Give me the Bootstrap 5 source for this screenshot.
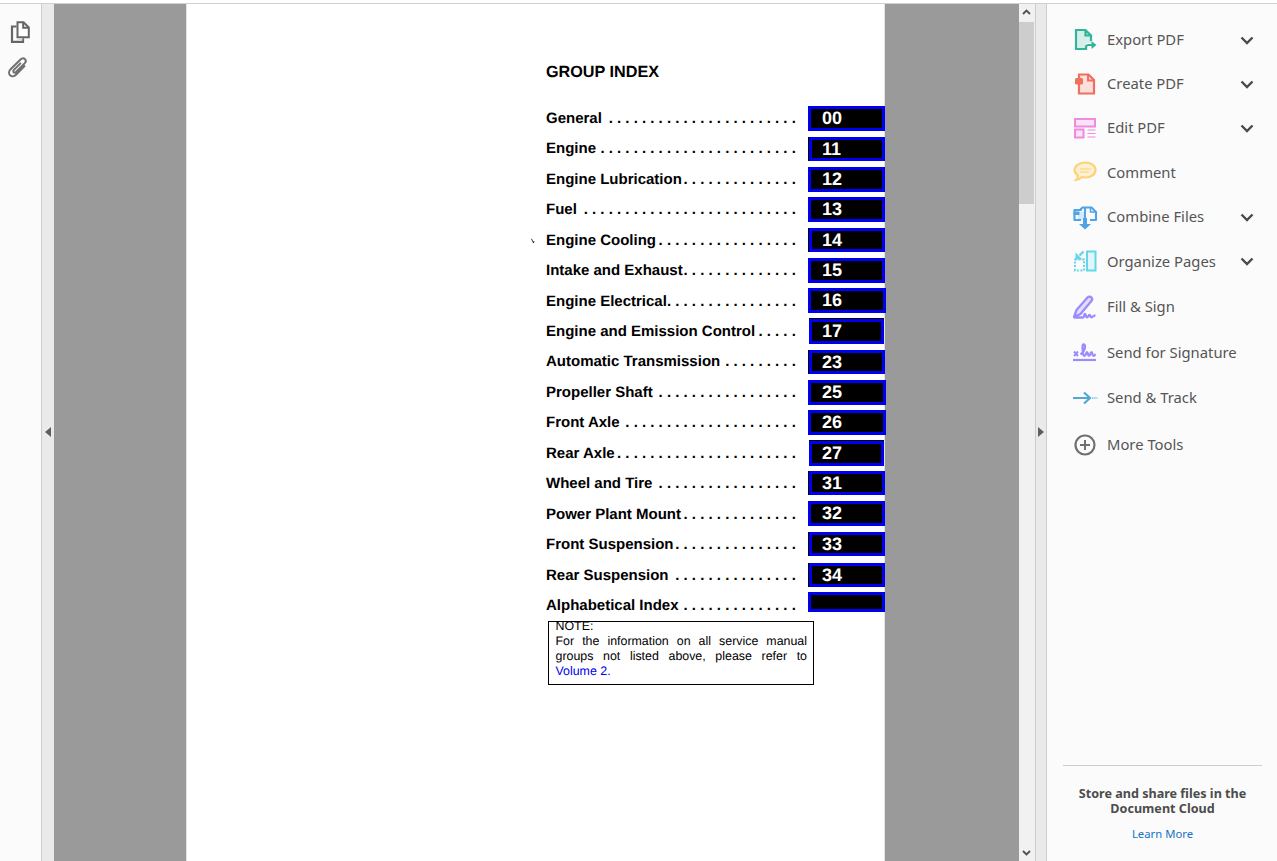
<!DOCTYPE html>
<html lang="en">
<head>
<meta charset="utf-8">
<title>GROUP INDEX</title>
<link href="https://cdn.jsdelivr.net/npm/bootstrap@5.3.0/dist/css/bootstrap.min.css" rel="stylesheet">
<style>
html,body{height:100%;overflow:hidden;background:#fbfbfb}
.top-strip{height:4px;background:#fff;border-bottom:1px solid #cfcfcf;flex:none}
.shell{height:857px}
.rail{width:42px;background:#fbfbfb;border-right:1px solid #cdcdcd;padding-top:16px;gap:12px}
.nudge-a{margin-right:2px}
.nudge-b{margin-right:5px}
.strip{background:#eaeaea;position:relative}
.strip-l{width:12px}
.strip-r{border-left:1px solid #cdcdcd;border-right:1px solid #cdcdcd;width:12px}
.arr{position:absolute;top:423px;width:0;height:0;border-top:5.5px solid transparent;border-bottom:5.5px solid transparent}
.arr-l{left:3px;border-right:6px solid #5f5f5f}
.arr-r{left:2px;border-left:6px solid #5f5f5f}
.viewer{width:965px;background:#9a9a9a;padding-left:132px;overflow:hidden}
.sheet{width:699px;height:100%;background:#fff;border-left:1px solid #e2e2e2;border-right:1px solid #e2e2e2;padding:57px 0 0 359px;font-family:"Liberation Sans",Arial,sans-serif;color:#000;position:relative;text-rendering:geometricPrecision}
.sheet-title{font-size:16.2px;font-weight:700;line-height:22px;margin-bottom:20px}
.idx-row{height:30.44px;font-size:15px;font-weight:700;position:relative}
.idx-label{width:250px;white-space:nowrap;flex:none;padding-top:2px}
.idx-name{margin-right:-20px}
.idx-dots{letter-spacing:4.15px;margin-right:-4px;font-size:15px}
.tabbox{width:77px;height:25px;margin-left:12px;background:#000;border:3px solid #0000f0;color:#fff;font-size:18px;line-height:18px;padding-left:11px;flex:none}
.tb-in{margin-left:13px;width:76px;height:24px;padding-left:10px;box-shadow:-1px 0 0 #000}
.tb-wide{width:78px}
.tb-nar{margin-left:13px;width:75px;padding-left:10px;box-shadow:0 -1px 0 #000}
.tb-low{height:20px;margin-bottom:6px}
.stray{position:absolute;left:-15px;top:13px}
.note-box{width:266px;height:64px;margin:1px 0 0 2px;border:1px solid #000;padding:0 6px 0 6.5px;font-size:12.4px;line-height:15px;overflow:hidden;text-align:justify}
.note-in{margin-top:-3.5px}
.note-link{color:#0000f0}
.scroller{width:16px;background:#f1f1f1;position:relative}
.thumb{position:absolute;left:0;top:18px;width:15px;height:182px;background:#cdcdcd}
.sc-up{position:absolute;left:3px;top:5px}
.sc-dn{position:absolute;left:3px;bottom:5px}
.tools{width:230px;background:#fbfbfb;font-family:"Noto Sans","Open Sans",sans-serif;color:#555}
.tool-list{padding-top:13.5px}
.tool-item{height:44px;padding-left:25px;font-size:14.8px;flex:none}
.tool-ico{width:26px;height:26px;flex:none;margin-right:9px}
.tool-chev{position:absolute;left:193px;top:18px}
.sp-a{margin-top:.5px}.sp-b{margin-top:1px}.sp-c{margin-top:1.5px}.sp-d{margin-top:3px}
.tools-foot{margin:auto 15px 0 16px;border-top:1px solid #cdcdcd;padding:20px 0 19px;text-align:center}
.foot-txt{font-size:12.6px;font-weight:700;line-height:15px;color:#4c4c4c;margin-bottom:10px}
.foot-link{font-size:11.3px;line-height:16px;color:#1473c7;text-decoration:none;display:block}
</style>
</head>
<body>
<svg width="0" height="0" class="position-absolute">
  <symbol id="chev" viewBox="0 0 14 9"><path d="M1.500 1.500 7 7l5.500-5.500" fill="none" stroke="#4a4a4a" stroke-width="2.400"/></symbol>
</svg>
<div class="top-strip"></div>
<div class="d-flex shell">
  <div class="rail d-flex flex-column align-items-center flex-shrink-0">
    <svg class="nudge-a" width="24" height="24" viewBox="0 0 24 24" fill="none" stroke="#666" stroke-width="2">
      <path d="M9.500 2.200h6l5.300 5.300v9.800H9.500z" fill="#fff"/><path d="M15.200 2.200v5.600h5.600"/>
      <path d="M8.500 6.500H4v15.300h11v-3.500" stroke-width="2.200"/><path d="M9.500 19.500h5" stroke="#d8d8d8"/>
    </svg>
    <svg class="nudge-b" width="24" height="24" viewBox="0 0 24 24" fill="none" stroke="#707070" stroke-width="2">
      <path d="M19 9.500 10 18.800c-1.800 1.800-4.300 2-5.900.5-1.600-1.600-1.300-4.200.5-6L14.500 3.500c1.300-1.300 3.200-1.500 4.400-.4 1.200 1.200 1 3-.3 4.300l-8.600 8.600c-.7.7-1.700.8-2.300.2-.6-.6-.5-1.600.2-2.300l7-7"/>
    </svg>
  </div>
  <div class="strip strip-l flex-shrink-0"><span class="arr arr-l"></span></div>
  <div class="viewer flex-shrink-0">
    <div class="sheet">
      <div class="sheet-title">GROUP INDEX</div>
      <div class="idx-row d-flex align-items-center"><span class="idx-label d-flex justify-content-between"><span class="idx-name">General</span><span class="idx-dots">.......................</span></span><span class="tabbox">00</span></div>
      <div class="idx-row d-flex align-items-center"><span class="idx-label d-flex justify-content-between"><span class="idx-name">Engine</span><span class="idx-dots">........................</span></span><span class="tabbox tb-in">11</span></div>
      <div class="idx-row d-flex align-items-center"><span class="idx-label d-flex justify-content-between"><span class="idx-name">Engine Lubrication</span><span class="idx-dots">..............</span></span><span class="tabbox">12</span></div>
      <div class="idx-row d-flex align-items-center"><span class="idx-label d-flex justify-content-between"><span class="idx-name">Fuel</span><span class="idx-dots">..........................</span></span><span class="tabbox">13</span></div>
      <div class="idx-row d-flex align-items-center"><svg class="stray" width="4" height="6" viewBox="0 0 4 6"><path d="M.5.800 2.500 5 3 3" fill="none" stroke="#223" stroke-width=".9"/></svg><span class="idx-label d-flex justify-content-between"><span class="idx-name">Engine Cooling</span><span class="idx-dots">.................</span></span><span class="tabbox tb-in">14</span></div>
      <div class="idx-row d-flex align-items-center"><span class="idx-label d-flex justify-content-between"><span class="idx-name">Intake and Exhaust</span><span class="idx-dots">..............</span></span><span class="tabbox">15</span></div>
      <div class="idx-row d-flex align-items-center"><span class="idx-label d-flex justify-content-between"><span class="idx-name">Engine Electrical</span><span class="idx-dots">................</span></span><span class="tabbox tb-wide">16</span></div>
      <div class="idx-row d-flex align-items-center"><span class="idx-label d-flex justify-content-between"><span class="idx-name">Engine and Emission Control</span><span class="idx-dots">.....</span></span><span class="tabbox tb-nar">17</span></div>
      <div class="idx-row d-flex align-items-center"><span class="idx-label d-flex justify-content-between"><span class="idx-name">Automatic Transmission</span><span class="idx-dots">.........</span></span><span class="tabbox tb-in">23</span></div>
      <div class="idx-row d-flex align-items-center"><span class="idx-label d-flex justify-content-between"><span class="idx-name">Propeller Shaft</span><span class="idx-dots">.................</span></span><span class="tabbox tb-wide">25</span></div>
      <div class="idx-row d-flex align-items-center"><span class="idx-label d-flex justify-content-between"><span class="idx-name">Front Axle</span><span class="idx-dots">.....................</span></span><span class="tabbox tb-wide">26</span></div>
      <div class="idx-row d-flex align-items-center"><span class="idx-label d-flex justify-content-between"><span class="idx-name">Rear Axle</span><span class="idx-dots">......................</span></span><span class="tabbox tb-nar">27</span></div>
      <div class="idx-row d-flex align-items-center"><span class="idx-label d-flex justify-content-between"><span class="idx-name">Wheel and Tire</span><span class="idx-dots">.................</span></span><span class="tabbox tb-in">31</span></div>
      <div class="idx-row d-flex align-items-center"><span class="idx-label d-flex justify-content-between"><span class="idx-name">Power Plant Mount</span><span class="idx-dots">..............</span></span><span class="tabbox">32</span></div>
      <div class="idx-row d-flex align-items-center"><span class="idx-label d-flex justify-content-between"><span class="idx-name">Front Suspension</span><span class="idx-dots">...............</span></span><span class="tabbox tb-in">33</span></div>
      <div class="idx-row d-flex align-items-center"><span class="idx-label d-flex justify-content-between"><span class="idx-name">Rear Suspension</span><span class="idx-dots">...............</span></span><span class="tabbox tb-in">34</span></div>
      <div class="idx-row d-flex align-items-center"><span class="idx-label d-flex justify-content-between"><span class="idx-name">Alphabetical Index</span><span class="idx-dots">..............</span></span><span class="tabbox tb-low"></span></div>
      <div class="note-box">
        <div class="note-in">NOTE:<br>For the information on all service manual groups not listed above, please refer to <span class="note-link">Volume 2.</span></div>
      </div>
    </div>
  </div>
  <div class="scroller flex-shrink-0">
    <svg class="sc-up" width="9" height="7" viewBox="0 0 9 7"><path d="M1 5 4.500 1.500 8 5" fill="none" stroke="#505050" stroke-width="1.800"/></svg>
    <div class="thumb"></div>
    <svg class="sc-dn" width="9" height="7" viewBox="0 0 9 7"><path d="M1 2 4.500 5.500 8 2" fill="none" stroke="#505050" stroke-width="1.800"/></svg>
  </div>
  <div class="strip strip-r flex-shrink-0"><span class="arr arr-r"></span></div>
  <div class="tools d-flex flex-column flex-shrink-0">
    <div class="tool-list">
      <div class="tool-item d-flex align-items-center position-relative">
        <svg class="tool-ico" viewBox="0 0 26 26"><path d="M4 3h9.500L19 8.500V16h-5v6H4z" fill="#d7efe9"/><path d="M13 22H4V3h9.500L19 8.500V14M13.500 3v5.500H19" fill="none" stroke="#33b398" stroke-width="2.200"/><path d="M14 23v-2.500q0-2.500 2.500-2.500H21" fill="none" stroke="#33b398" stroke-width="2.200"/><path d="M19.500 14 24.500 18l-5 4z" fill="#33b398"/></svg>
        Export PDF
        <svg class="tool-chev" width="14" height="9"><use href="#chev"/></svg>
      </div>
      <div class="tool-item d-flex align-items-center position-relative">
        <svg class="tool-ico" viewBox="0 0 26 26"><path d="M7 3.500h9.500L22 9v13.500H7z" fill="#fadfdb" stroke="#f0705f" stroke-width="2.200"/><path d="M16 3.500v6h6" fill="none" stroke="#f0705f" stroke-width="2"/><rect x="3" y="7" width="8" height="6.500" rx="1.500" fill="#f0705f"/></svg>
        Create PDF
        <svg class="tool-chev" width="14" height="9"><use href="#chev"/></svg>
      </div>
      <div class="tool-item d-flex align-items-center position-relative">
        <svg class="tool-ico" viewBox="0 0 26 26"><rect x="3" y="4" width="20" height="7.500" fill="#fae2f7" stroke="#f08adf" stroke-width="2"/><rect x="3" y="14.500" width="8.500" height="8" fill="#fae2f7" stroke="#f08adf" stroke-width="2"/><path d="M15.500 15h8M15.500 18.500h8M15.500 22h8" stroke="#f08adf" stroke-width="1.200"/></svg>
        Edit PDF
        <svg class="tool-chev" width="14" height="9"><use href="#chev"/></svg>
      </div>
      <div class="tool-item d-flex align-items-center position-relative sp-a">
        <svg class="tool-ico" viewBox="0 0 26 26"><path d="M13.500 3.500c5.500 0 10 3.200 10 7.500s-4.500 7.500-10 7.500c-1.300 0-2.500-.2-3.600-.5-1.500 1.600-3.800 3-5.900 3 1.200-1.100 1.900-2.700 1.900-4.500-2-1.300-3.400-3.300-3.400-5.500 0-4.300 5.500-7.500 11-7.500z" fill="#fdf1d2" stroke="#fdd27a" stroke-width="2.200"/><path d="M8 10h11M8 13h9" stroke="#fbd06f" stroke-width="1"/></svg>
        Comment
      </div>
      <div class="tool-item d-flex align-items-center position-relative sp-a">
        <svg class="tool-ico" viewBox="0 0 26 26"><path d="M6 8h6v8H6z" fill="#d6e9f9"/><path d="M9 16H2.500V6H8l2.500-2.500h2.500V16M13 16V3.500h6.500L24 8v8h-6" fill="none" stroke="#4fa3e6" stroke-width="2.100" stroke-linejoin="round"/><path d="M1.500 7.500h6v3.500h-6z" fill="#4fa3e6"/><path d="M18.500 3.500v4.500H24M9 4v3" fill="none" stroke="#4fa3e6" stroke-width="1.500"/><path d="M11 14h4v6h4l-6 5.500L7 20h4z" fill="#4fa3e6"/></svg>
        Combine Files
        <svg class="tool-chev" width="14" height="9"><use href="#chev"/></svg>
      </div>
      <div class="tool-item d-flex align-items-center position-relative sp-a">
        <svg class="tool-ico" viewBox="0 0 26 26"><rect x="15" y="3.500" width="8.500" height="19" fill="#e0f6fa" stroke="#65d6e8" stroke-width="2"/><path d="M3 11.500h9v11H3z" fill="none" stroke="#65d6e8" stroke-width="2" stroke-dasharray="2 1.600"/><path d="M11.500 3.500 7.500 7.500" stroke="#65d6e8" stroke-width="2.400"/><path d="M3.500 4.500v7h7z" fill="#65d6e8"/></svg>
        Organize Pages
        <svg class="tool-chev" width="14" height="9"><use href="#chev"/></svg>
      </div>
      <div class="tool-item d-flex align-items-center position-relative sp-c">
        <svg class="tool-ico" viewBox="0 0 26 26"><path d="M2 23 4.500 16 15.500 3.500c1.200-1.200 3-1.200 4 0 .9 1 .8 2.500-.3 3.700L8.500 20z" fill="#e3defe" stroke="#9a8cff" stroke-width="2.300" stroke-linejoin="round"/><path d="M2 23.500h9c1.200 0 1-3.500 2-3.500s.5 3.300 2 3.300 1.200-2.300 2.500-2.300.5 2.300 2 2.300 1.500-1.800 4-2" fill="none" stroke="#9a8cff" stroke-width="2.300"/></svg>
        Fill &amp; Sign
      </div>
      <div class="tool-item d-flex align-items-center position-relative sp-c">
        <svg class="tool-ico" viewBox="0 0 26 26"><path d="M2 12.500 6 17M6 12.500 2 17" stroke="#9a8cff" stroke-width="2"/><path d="M8.500 15.500c2-1.500 4.500-5 4.500-8 0-3-2.500-3-2.500.5 0 3 .5 9 2 9 1.800 0 1.200-4 2.500-4s.5 4 2 4 1.200-4 2.500-4 .5 4 2 4 1.500-1.500 2-2" fill="none" stroke="#9a8cff" stroke-width="2.200"/><path d="M1 21h23" stroke="#9a8cff" stroke-width="2.200"/></svg>
        Send for Signature
      </div>
      <div class="tool-item d-flex align-items-center position-relative sp-c">
        <svg class="tool-ico" viewBox="0 0 26 26"><path d="M1 13h16M12 7.500l6 5.500-6 5.500" fill="none" stroke="#4fa9d8" stroke-width="2.200"/><path d="M20 13h5.500" stroke="#9ed0ea" stroke-width="2" stroke-dasharray="1.500 .7"/></svg>
        Send &amp; Track
      </div>
      <div class="tool-item d-flex align-items-center position-relative sp-d">
        <svg class="tool-ico" viewBox="0 0 26 26"><circle cx="13" cy="13" r="9.500" fill="none" stroke="#707070" stroke-width="2.200"/><path d="M13 8v10M8 13h10" stroke="#707070" stroke-width="2"/></svg>
        More Tools
      </div>
    </div>
    <div class="tools-foot">
      <div class="foot-txt">Store and share files in the<br>Document Cloud</div>
      <a class="foot-link" href="#">Learn More</a>
    </div>
  </div>
</div>
<script src="https://cdn.jsdelivr.net/npm/bootstrap@5.3.0/dist/js/bootstrap.bundle.min.js"></script>
</body>
</html>
